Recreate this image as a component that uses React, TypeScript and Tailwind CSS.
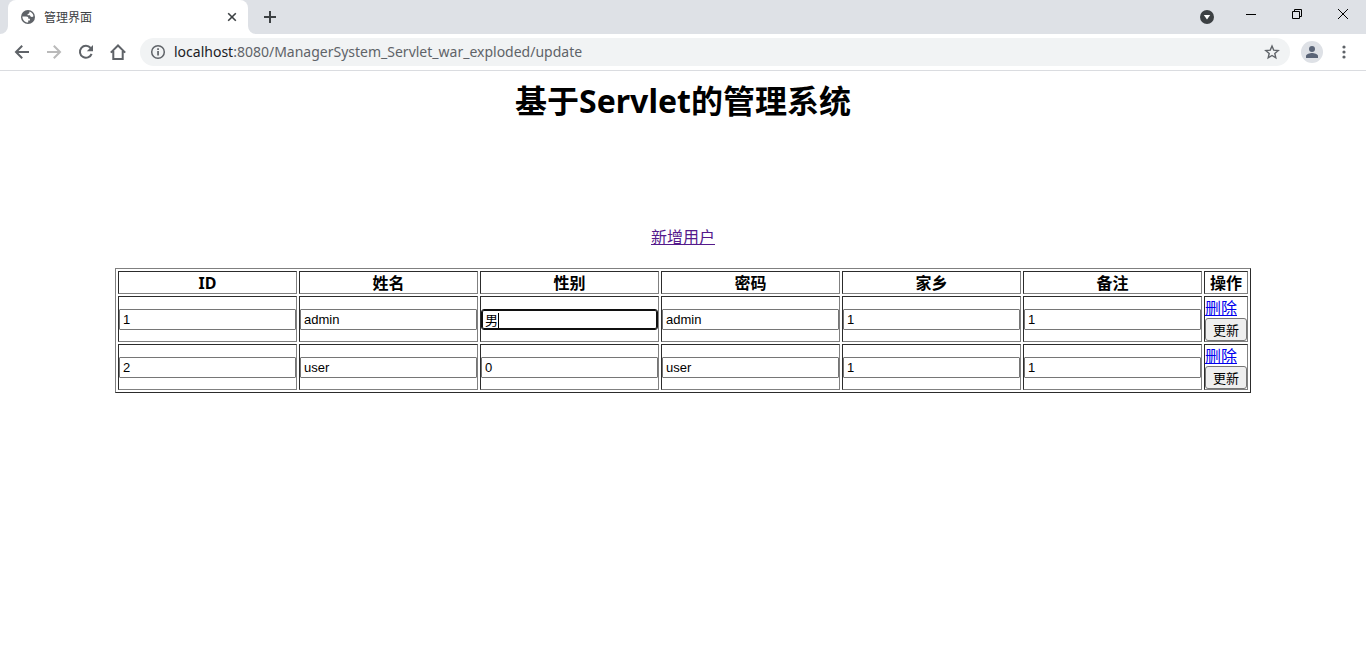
import type { ReactNode } from "react";

const columns = ["ID", "姓名", "性别", "密码", "家乡", "备注"];

const users = [
  { values: ["1", "admin", "男", "admin", "1", "1"], active: 2 },
  { values: ["2", "user", "0", "user", "1", "1"], active: -1 },
];

const cell = "border border-t-[#2c2c2c] border-l-[#2c2c2c] border-b-[#808080] border-r-[#808080]";

function IconButton({ label, className, children }: { label: string; className: string; children: ReactNode }) {
  return (
    <button type="button" aria-label={label} className={`flex items-center justify-center shrink-0 ${className}`}>
      {children}
    </button>
  );
}

function TabStrip() {
  return (
    <div className="flex items-end h-[34px] pr-px bg-[#dee1e6] text-[#3c4043]">
      <svg className="w-2 h-2 shrink-0" viewBox="0 0 8 8" fill="#fff"><path d="M8 0v8H0a8 8 0 0 0 8-8z" /></svg>
      <div className="flex items-center w-60 h-full pl-3 pr-2 bg-white rounded-t-lg">
        <svg className="w-4 h-4 shrink-0" viewBox="0 0 16 16">
          <circle cx="8" cy="8" r="7" fill="#5f6368" />
          <path d="M9.6 2.6c2 .6 3.6 2.4 3.9 4.6l-1.3.9-1.4-.4-.9-1.4H7.6V5l1.5-.6z" fill="#fff" />
          <path d="M2.4 7.6h3.9c1.6 0 2.1.9 2.1 2.2h1.5v1.6H8.2v2.2C5 13.700 2.300 11 2.400 7.600z" fill="#fff" />
        </svg>
        <span className="flex-1 pt-0.5 ml-2 text-xs">管理界面</span>
        <IconButton label="关闭标签页" className="w-4 h-4">
          <svg className="w-4 h-4" viewBox="0 0 16 16" stroke="#3c4043" strokeWidth="1.6"><path d="m4.2 4.2 7.6 7.6m0-7.6-7.6 7.6" /></svg>
        </IconButton>
      </div>
      <svg className="w-2 h-2 shrink-0" viewBox="0 0 8 8" fill="#fff"><path d="M0 0v8h8a8 8 0 0 1-8-8z" /></svg>
      <IconButton label="新标签页" className="w-7 h-full">
        <svg className="w-4 h-4" viewBox="0 0 16 16" stroke="#3c4043" strokeWidth="2"><path d="M8 2v12M2 8h12" /></svg>
      </IconButton>
      <div className="flex-1" />
      <IconButton label="搜索标签页" className="w-11 h-full">
        <svg className="w-4 h-4" viewBox="0 0 16 16"><circle cx="8" cy="8" r="7" fill="#3c4043" /><path d="M4.8 6h6.4L8 10.6z" fill="#fff" /></svg>
      </IconButton>
      <div className="flex self-start h-7">
        <IconButton label="最小化" className="w-11">
          <svg className="w-3 h-3" viewBox="0 0 12 12" fill="#000"><path d="M1 6h10v1H1z" /></svg>
        </IconButton>
        <IconButton label="还原" className="w-12">
          <svg className="w-3 h-3" viewBox="0 0 12 12" fill="none" stroke="#000"><path d="M1.5 3.5h7v7h-7zM3.5 3.5v-2h7v7h-2" /></svg>
        </IconButton>
        <IconButton label="关闭" className="w-11">
          <svg className="w-3 h-3" viewBox="0 0 12 12" stroke="#000"><path d="m1 1 10 10M11 1 1 11" /></svg>
        </IconButton>
      </div>
    </div>
  );
}

function Toolbar() {
  return (
    <div className="flex items-center h-[37px] pl-1.5 border-b border-[#dadce0]">
      <IconButton label="后退" className="w-8">
        <svg className="w-4 h-4" viewBox="0 0 16 16" fill="none" stroke="#5f6368" strokeWidth="2"><path d="M15 8H2.5M8.2 1.8 2 8l6.2 6.2" /></svg>
      </IconButton>
      <IconButton label="前进" className="w-8">
        <svg className="w-4 h-4" viewBox="0 0 16 16" fill="none" stroke="#bababa" strokeWidth="2"><path d="M1 8h12.5M7.8 1.8 14 8l-6.2 6.2" /></svg>
      </IconButton>
      <IconButton label="重新加载" className="w-8">
        <svg className="w-4 h-4" viewBox="0 0 16 16"><path d="M13.6 9.800A6 6 0 1 1 12.600 4" fill="none" stroke="#5f6368" strokeWidth="2" /><path d="M15 1v6.200H8.800z" fill="#5f6368" /></svg>
      </IconButton>
      <IconButton label="主页" className="w-8">
        <svg className="w-4 h-4" viewBox="0 0 16 16" fill="none" stroke="#5f6368" strokeWidth="2"><path d="M.8 8.600 8 1.500l7.200 7.100M3.300 7v8h9.400V7" /></svg>
      </IconButton>
      <div className="flex items-center flex-1 h-7 ml-1.5 px-2.5 rounded-full bg-[#f1f3f4]">
        <svg className="w-4 h-4 shrink-0" viewBox="0 0 16 16"><circle cx="8" cy="8" r="6.300" fill="none" stroke="#5f6368" strokeWidth="1.500" /><path d="M7.200 7h1.700v4.600H7.200zM7.200 4.300h1.700V6H7.200z" fill="#5f6368" /></svg>
        <span className="flex-1 ml-2 text-sm text-[#5f6368]">
          <span className="text-[#202124]">localhost</span>:8080/ManagerSystem_Servlet_war_exploded/update
        </span>
        <IconButton label="收藏" className="w-4">
          <svg className="w-4 h-4" viewBox="0 0 16 16" fill="none" stroke="#5f6368" strokeWidth="1.400"><path d="m8 2 1.700 4.100 4.500.4-3.400 2.900 1 4.400L8 11.500l-3.800 2.300 1-4.400-3.400-2.900 4.500-.4z" /></svg>
        </IconButton>
      </div>
      <IconButton label="个人资料" className="w-[22px] h-[22px] ml-[11px] rounded-full bg-[#dee1e6]">
        <svg className="w-4 h-4" viewBox="0 0 16 16" fill="#5a6477"><circle cx="8" cy="5" r="3" /><path d="M2 14v-2c0-2 4-3 6-3s6 1 6 3v2z" /></svg>
      </IconButton>
      <IconButton label="菜单" className="w-[43px] pr-px">
        <svg className="w-4 h-4" viewBox="0 0 16 16" fill="#5f6368"><circle cx="8" cy="3" r="1.600" /><circle cx="8" cy="8" r="1.600" /><circle cx="8" cy="13" r="1.600" /></svg>
      </IconButton>
    </div>
  );
}

function Field({ label, value, active }: { label: string; value: string; active: boolean }) {
  return (
    <div className="relative">
      <input
        type="text"
        aria-label={label}
        defaultValue={value}
        className={`block w-full h-[21px] px-[3px] border font-['Liberation_Sans','Noto_Sans_CJK_SC',sans-serif] text-[13px] text-black bg-white outline-none ${
          active ? "border-[#101010] rounded-[3px] ring-1 ring-inset ring-[#101010]" : "border-[#767676] rounded-[1px]"
        }`}
      />
      {/* text caret */}
      {active && <span className="absolute left-[17px] top-1 w-px h-[15px] bg-black" />}
    </div>
  );
}

export default function App() {
  return (
    <div className="bg-white text-black font-['Noto_Sans','Noto_Sans_CJK_SC',sans-serif]">
      <TabStrip />
      <Toolbar />
      <main className="flex flex-col items-center px-[115px] pt-2">
        <h1 className="text-[32px] leading-[43px] font-bold">基于Servlet的管理系统</h1>
        <a href="#add" className="mt-[105px] text-base leading-[21px] text-[#551a8b] underline">新增用户</a>
        <table className="w-full mt-5 table-fixed border-separate border-spacing-[2px] border border-t-[#808080] border-l-[#808080] border-b-[#2c2c2c] border-r-[#2c2c2c]">
          <thead>
            <tr className="text-base leading-[19px]">
              {columns.map((name) => (
                <th key={name} className={`p-0 pt-0.5 ${cell}`}>{name}</th>
              ))}
              <th className={`w-11 p-0 pt-0.5 ${cell}`}>操作</th>
            </tr>
          </thead>
          <tbody>
            {users.map((user) => (
              <tr key={user.values[0]}>
                {user.values.map((value, i) => (
                  <td key={columns[i]} className={`p-0 align-middle ${cell}`}>
                    <Field label={columns[i]} value={value} active={user.active === i} />
                  </td>
                ))}
                <td className={`p-0 ${cell}`}>
                  <a href="#delete" className="block w-fit pt-0.5 text-base leading-[19px] text-[#0000ee] underline">删除</a>
                  <button type="button" className="block w-full h-[23px] border border-[#767676] rounded-[3px] bg-[#efefef] text-[13px] leading-5">更新</button>
                </td>
              </tr>
            ))}
          </tbody>
        </table>
      </main>
    </div>
  );
}
